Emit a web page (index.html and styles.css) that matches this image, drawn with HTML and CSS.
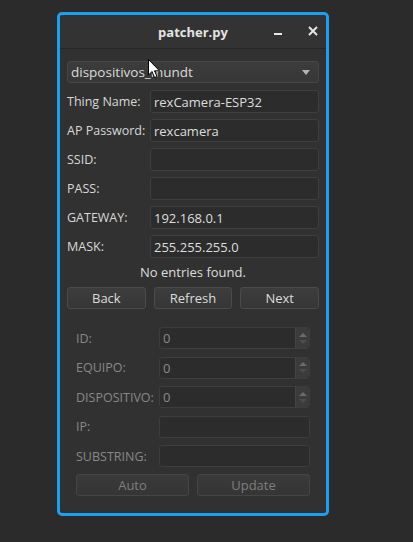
FILE: index.html
```html
<!DOCTYPE html>
<html>
<head>
<meta charset="utf-8">
<link rel="stylesheet" href="styles.css">
</head>
<body>
<div class="window">
  <div class="titlebar">
    <span class="title">patcher.py</span>
    <span class="tb-btn min"></span>
    <span class="tb-btn close">
      <svg width="10" height="10" viewBox="0 0 10 10"><path d="M1 1 L9 9 M9 1 L1 9" stroke="#e6e6e6" stroke-width="2"/></svg>
    </span>
  </div>
  <div class="content">
    <div class="combo">
      <span>dispositivos_mundt</span>
      <span class="combo-arrow"></span>
    </div>
    <div class="form">
      <label>Thing Name:</label><div class="input">rexCamera-ESP32</div>
      <label>AP Password:</label><div class="input">rexcamera</div>
      <label>SSID:</label><div class="input"></div>
      <label>PASS:</label><div class="input"></div>
      <label>GATEWAY:</label><div class="input">192.168.0.1</div>
      <label>MASK:</label><div class="input">255.255.255.0</div>
    </div>
    <div class="message">No entries found.</div>
    <div class="buttons three">
      <div class="btn">Back</div>
      <div class="btn">Refresh</div>
      <div class="btn">Next</div>
    </div>
    <div class="group">
      <div class="form disabled">
        <label>ID:</label><div class="input spin">0<span class="spin-btns"><i class="up"></i><i class="down"></i></span></div>
        <label>EQUIPO:</label><div class="input spin">0<span class="spin-btns"><i class="up"></i><i class="down"></i></span></div>
        <label>DISPOSITIVO:</label><div class="input spin">0<span class="spin-btns"><i class="up"></i><i class="down"></i></span></div>
        <label>IP:</label><div class="input"></div>
        <label>SUBSTRING:</label><div class="input"></div>
      </div>
      <div class="buttons two">
        <div class="btn dis">Auto</div>
        <div class="btn dis">Update</div>
      </div>
    </div>
  </div>
</div>
<svg class="cursor" width="13" height="20" viewBox="0 0 13 20">
  <path d="M0.5 0.5 L0.5 16 L4 12.5 L6.5 18.5 L9 17.5 L6.5 11.8 L11.5 11.8 Z" fill="#ffffff" stroke="#000000" stroke-width="1"/>
</svg>
</body>
</html>
```
FILE: styles.css
```css
* { box-sizing: border-box; }
html, body { margin: 0; padding: 0; }
body {
  background: #2b2b2b;
  width: 413px;
  height: 542px;
  font-family: "Open Sans", "Noto Sans", sans-serif;
  font-size: 12.5px;
  color: #d4d4d4;
  position: relative;
  overflow: hidden;
}
.window {
  margin: 12px 0 0 57px;
  width: 272px;
  height: 504px;
  border: 3px solid #18a0f2;
  border-radius: 5px;
  background: #313131;
}
.titlebar {
  height: 34px;
  border-bottom: 1px solid #262626;
  background: #333333;
  position: relative;
  display: flex;
  align-items: center;
  justify-content: center;
  border-radius: 3px 3px 0 0;
}
.title {
  font-weight: bold;
  font-size: 13px;
  color: #e4e4e4;
}
.tb-btn { position: absolute; }
.min {
  left: 214px;
  top: 18px;
  width: 8px;
  height: 2px;
  background: #e6e6e6;
}
.close {
  left: 248px;
  top: 11px;
  width: 10px;
  height: 10px;
  display: flex;
}
.content {
  padding: 12px 7px 0 7px;
}
.combo {
  height: 22px;
  border: 1px solid #474747;
  border-radius: 3px;
  background: linear-gradient(#3c3c3c, #373737);
  display: flex;
  align-items: center;
  justify-content: space-between;
  padding: 0 8px 0 3px;
  font-size: 13.5px;
  color: #dadada;
}
.combo-arrow {
  width: 0;
  height: 0;
  border-left: 4px solid transparent;
  border-right: 4px solid transparent;
  border-top: 5px solid #b4b4b4;
}
.form {
  margin-top: 7px;
  display: grid;
  grid-template-columns: 83px 1fr;
  row-gap: 6px;
  align-items: center;
}
.form label {
  white-space: nowrap;
  color: #d8d8d8;
}
.input {
  height: 23px;
  border: 1px solid #3f3f3f;
  border-radius: 3px;
  background: #2c2c2c;
  display: flex;
  align-items: center;
  padding: 0 3px;
  font-size: 13px;
  color: #dedede;
  position: relative;
}
.message {
  height: 29px;
  line-height: 28px;
  text-align: center;
  color: #dedede;
  font-size: 13px;
}
.buttons {
  display: grid;
  column-gap: 8px;
}
.buttons.three { grid-template-columns: 1fr 1fr 1fr; }
.buttons.two { grid-template-columns: 1fr 1fr; margin-top: 7px; }
.btn {
  height: 22px;
  border: 1px solid #4b4b4b;
  border-radius: 3px;
  background: linear-gradient(#3d3d3d, #363636);
  display: flex;
  align-items: center;
  justify-content: center;
  color: #dcdcdc;
  font-size: 13px;
}
.btn.dis {
  color: #7e7e7e;
  border-color: #454545;
  background: linear-gradient(#3a3a3a, #353535);
}
.group {
  margin-top: 18px;
  padding: 0 9px;
}
.group .form {
  margin-top: 0;
  row-gap: 7.5px;
}
.form.disabled label { color: #888888; }
.form.disabled .input {
  height: 22px;
  color: #8a8a8a;
  border-color: #3d3d3d;
}
.spin-btns {
  position: absolute;
  right: 0;
  top: 0;
  bottom: 0;
  width: 14px;
  border-left: 1px solid #444;
  background: #3b3b3b;
  border-radius: 0 3px 3px 0;
  display: flex;
  flex-direction: column;
  align-items: center;
  justify-content: center;
  gap: 3px;
}
.spin-btns i {
  width: 0;
  height: 0;
  border-left: 4px solid transparent;
  border-right: 4px solid transparent;
}
.spin-btns .up { border-bottom: 4px solid #6a6a6a; }
.spin-btns .down { border-top: 4px solid #4d4d4d; }
.cursor {
  position: absolute;
  left: 148px;
  top: 59px;
}
```
